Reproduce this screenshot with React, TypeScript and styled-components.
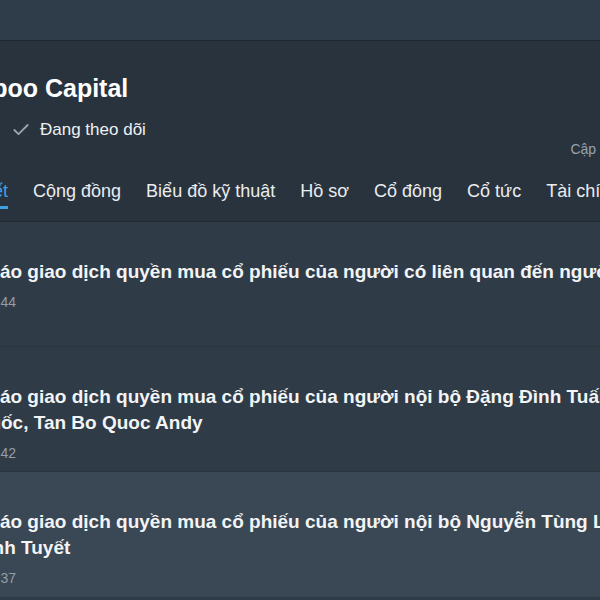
import React from 'react';
import styled, { createGlobalStyle } from 'styled-components';

const GlobalStyle = createGlobalStyle`
    html, body {
        margin: 0;
        padding: 0;
        background: #2f3b47;
    }
    body {
        font-family: "Liberation Sans", Arial, sans-serif;
    }
`

const Frame = styled.div`
    width: 600px;
    height: 600px;
    overflow: hidden;
    background-color: #2f3b47;
`

const TopBar = styled.div`
    height: 40px;
    background-color: #2f3c49;
    border-bottom: 1px solid #1f2830;
`

const Header = styled.div`
    background-color: #29333d;
    border-bottom: 1px solid #1f2830;
    padding: 32px 0 12px;
`

// the page is wider than the shot, so the column starts left of the frame
const HeaderInner = styled.div`
    width: 798px;
    margin-left: -54px;
    display: flex;
    flex-direction: column;
`

const Title = styled.h1`
    margin: 0 0 0 -8px;
    font-size: 25px;
    line-height: 30px;
    font-weight: bold;
    color: #ffffff;
    white-space: nowrap;
`

const MetaRow = styled.div`
    display: flex;
    height: 40px;
    margin-top: 15px;
`

const FollowButton = styled.button`
    display: inline-flex;
    align-items: center;
    gap: 9px;
    height: 24px;
    margin-left: 65px;
    padding: 0;
    border: none;
    background: none;
    font-family: inherit;
    font-size: 17px;
    color: #eef1f3;
    cursor: pointer;
    align-self: flex-start;
`

const UpdatedAt = styled.span`
    margin-left: auto;
    align-self: flex-end;
    font-size: 14px;
    line-height: 18px;
    color: #98a2ac;
    white-space: nowrap;
`

const TabBar = styled.div`
    display: flex;
    gap: 25px;
    margin-top: 22px;
    margin-left: 3px;
`

const Tab = styled.div<{ $active?: boolean }>`
    font-size: 18px;
    line-height: 22px;
    padding-bottom: 4px;
    white-space: nowrap;
    color: ${p => p.$active ? '#3f9fe4' : '#e9edf0'};
    border-bottom: 3px solid ${p => p.$active ? '#3f9fe4' : 'transparent'};
    cursor: pointer;
`

const List = styled.div`
    display: flex;
    flex-direction: column;
`

const Item = styled.div<{ $hovered?: boolean }>`
    box-sizing: border-box;
    height: 125px;
    padding-top: 37px;
    background-color: ${p => p.$hovered ? '#3a4754' : '#2f3b47'};
    border-bottom: 1px solid ${p => p.$hovered ? '#3a4754' : '#2a343f'};
`

const ItemInner = styled.div`
    margin-left: -75px;
`

const ItemTitle = styled.div`
    font-size: 19px;
    line-height: 26px;
    font-weight: bold;
    color: #f2f4f6;
    white-space: nowrap;
`

const ItemMeta = styled.div`
    margin-top: 8px;
    font-size: 14px;
    line-height: 18px;
    color: #939ea8;
    white-space: nowrap;
`

const CheckIcon = () => (
    <svg width="20" height="20" viewBox="0 0 24 24" fill="none" stroke="#9aa4ad"
        strokeWidth="2.2" strokeLinecap="round" strokeLinejoin="round">
        <path d="M20 6 9 17l-5-5" />
    </svg>
)

const tabs = ['Bài viết', 'Cộng đồng', 'Biểu đồ kỹ thuật', 'Hồ sơ', 'Cổ đông', 'Cổ tức', 'Tài chính', 'Sự kiện']

const posts = [
    {
        id: 1,
        lines: ['Thông báo giao dịch quyền mua cổ phiếu của người có liên quan đến người nội bộ Nguyễn Hồ Nam'],
        time: 'Thứ sáu 16:44',
    },
    {
        id: 2,
        lines: [
            'Thông báo giao dịch quyền mua cổ phiếu của người nội bộ Đặng Đình Tuấn, Nguyễn Thế Tài, Phạm',
            'Minh Quốc, Tan Bo Quoc Andy',
        ],
        time: 'Thứ sáu 16:42',
    },
    {
        id: 3,
        lines: [
            'Thông báo giao dịch quyền mua cổ phiếu của người nội bộ Nguyễn Tùng Lâm, Nguyễn',
            'Thị Thanh Tuyết',
        ],
        time: 'Thứ sáu 16:37',
        hovered: true,
    },
]

const App = () => {
    return (
        <Frame>
            <GlobalStyle />
            <TopBar />
            <Header>
                <HeaderInner>
                    <Title>Bamboo Capital</Title>
                    <MetaRow>
                        <FollowButton>
                            <CheckIcon />
                            Đang theo dõi
                        </FollowButton>
                        <UpdatedAt>Cập nhật: 16:45 29/05/2020</UpdatedAt>
                    </MetaRow>
                    <TabBar>
                        {tabs.map((t, i) => (
                            <Tab key={t} $active={i === 0}>{t}</Tab>
                        ))}
                    </TabBar>
                </HeaderInner>
            </Header>
            <List>
                {posts.map(post => (
                    <Item key={post.id} $hovered={post.hovered}>
                        <ItemInner>
                            {post.lines.map(line => (
                                <ItemTitle key={line}>{line}</ItemTitle>
                            ))}
                            <ItemMeta>{post.time}</ItemMeta>
                        </ItemInner>
                    </Item>
                ))}
            </List>
        </Frame>
    );
};

export default App;
